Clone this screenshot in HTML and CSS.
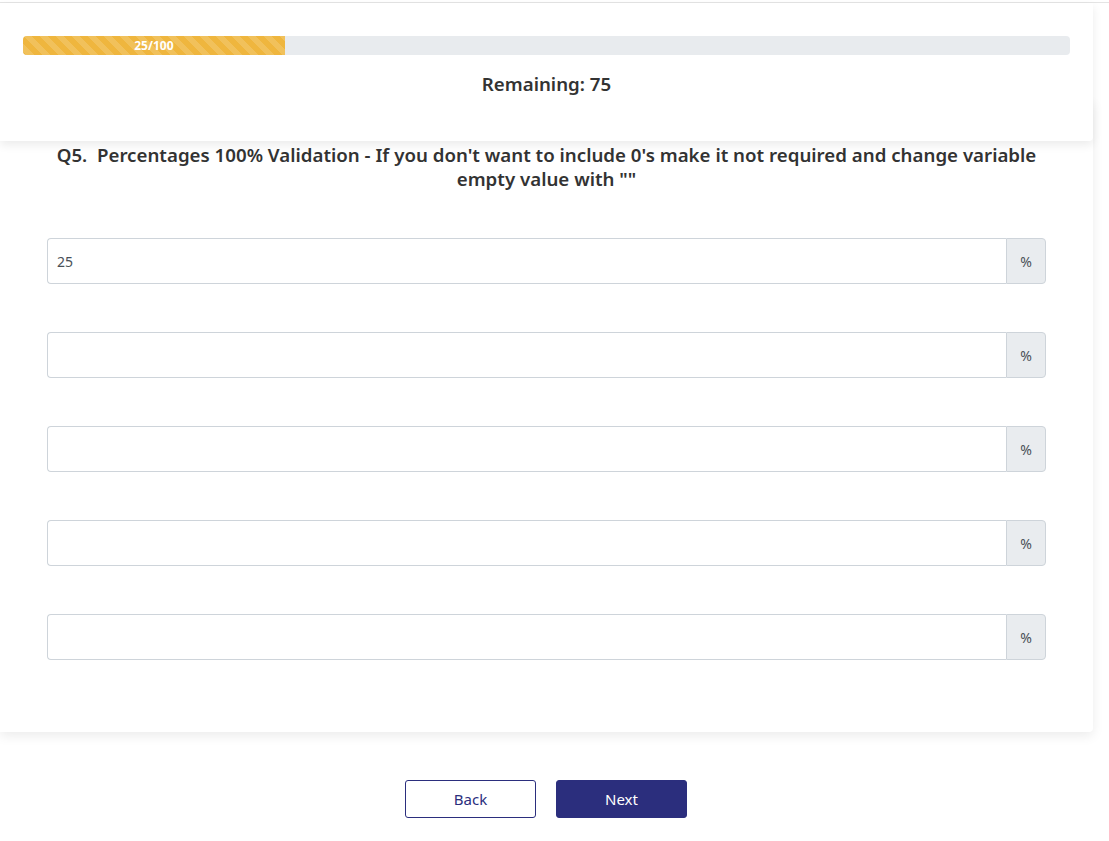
FILE: index.html
```html
<!DOCTYPE html>
<html lang="en">
<head>
<meta charset="utf-8">
<title>Survey</title>
<link rel="stylesheet" href="styles.css">
</head>
<body>
<div class="page">
  <header class="progress-card">
    <div class="progress">
      <div class="progress-bar" style="width:25%">25/100</div>
    </div>
    <div class="remaining">Remaining: 75</div>
  </header>
  <main class="question-card">
    <h2 class="question">Q5.&nbsp; Percentages 100% Validation - If you don't want to include 0's make it not required and change variable empty value with ""</h2>
    <div class="answers">
      <div class="input-group"><input class="form-control" type="text" value="25"><span class="addon">%</span></div>
      <div class="input-group"><input class="form-control" type="text" value=""><span class="addon">%</span></div>
      <div class="input-group"><input class="form-control" type="text" value=""><span class="addon">%</span></div>
      <div class="input-group"><input class="form-control" type="text" value=""><span class="addon">%</span></div>
      <div class="input-group"><input class="form-control" type="text" value=""><span class="addon">%</span></div>
    </div>
  </main>
  <nav class="nav-buttons">
    <button class="btn btn-back" type="button">Back</button>
    <button class="btn btn-next" type="button">Next</button>
  </nav>
</div>
</body>
</html>
```
FILE: styles.css
```css
html, body {
  margin: 0;
  padding: 0;
  background: #fff;
}
body {
  padding-top: 2px;
  font-family: "Noto Sans", "Open Sans", "Liberation Sans", sans-serif;
  color: #333;
}
.page {
  border-top: 1px solid #e4e4e4;
}
.progress-card {
  position: relative;
  z-index: 2;
  width: 1093px;
  box-sizing: border-box;
  background: #fff;
  padding: 33px 23px 0 23px;
  height: 138px;
  border-radius: 0 0 4px 0;
  box-shadow: 0 4px 10px rgba(0, 0, 0, 0.08);
}
.progress {
  height: 19px;
  background: #e8ebee;
  border-radius: 4px;
  overflow: hidden;
  display: flex;
}
.progress-bar {
  background-color: #efb63e;
  background-image: linear-gradient(45deg, rgba(255,255,255,.15) 25%, transparent 25%, transparent 50%, rgba(255,255,255,.15) 50%, rgba(255,255,255,.15) 75%, transparent 75%, transparent);
  background-size: 16px 16px;
  color: #fff;
  font-size: 12px;
  font-weight: 700;
  line-height: 19px;
  text-align: center;
  white-space: nowrap;
}
.remaining {
  text-align: center;
  font-size: 18.7px;
  font-weight: 600;
  line-height: 24px;
  margin-top: 17px;
  color: #333;
}
.question-card {
  position: relative;
  z-index: 1;
  width: 1093px;
  box-sizing: border-box;
  margin-top: -41px;
  background: #fff;
  padding: 43px 47px 72px 47px;
  border-radius: 0 0 4px 0;
  box-shadow: 0 4px 12px rgba(0, 0, 0, 0.08);
}
.question {
  margin: 0;
  text-align: center;
  font-size: 18.7px;
  font-weight: 600;
  line-height: 24px;
  color: #333;
}
.answers {
  margin-top: 47px;
  display: flex;
  flex-direction: column;
  gap: 48px;
}
.input-group {
  display: flex;
  height: 46px;
}
.form-control {
  flex: 1;
  min-width: 0;
  margin: 0;
  box-sizing: border-box;
  height: 46px;
  border: 1px solid #ced4da;
  border-right: 0;
  border-radius: 4px 0 0 4px;
  padding: 0 9px;
  font-family: inherit;
  font-size: 14px;
  color: #495057;
  background: #fff;
  outline: none;
}
.addon {
  width: 40px;
  box-sizing: border-box;
  border: 1px solid #ced4da;
  border-radius: 0 4px 4px 0;
  background: #e9ecef;
  display: flex;
  align-items: center;
  justify-content: center;
  font-size: 14px;
  color: #495057;
}
.nav-buttons {
  display: flex;
  justify-content: center;
  gap: 20px;
  margin-top: 48px;
  width: 1092px;
}
.btn {
  width: 131px;
  height: 38px;
  box-sizing: border-box;
  border-radius: 3px;
  font-family: inherit;
  font-size: 15px;
  cursor: pointer;
}
.btn-back {
  background: #fff;
  border: 1px solid #2b2e7d;
  color: #2b2e7d;
}
.btn-next {
  background: #2b2e7d;
  border: 1px solid #2b2e7d;
  color: #fff;
}
```
